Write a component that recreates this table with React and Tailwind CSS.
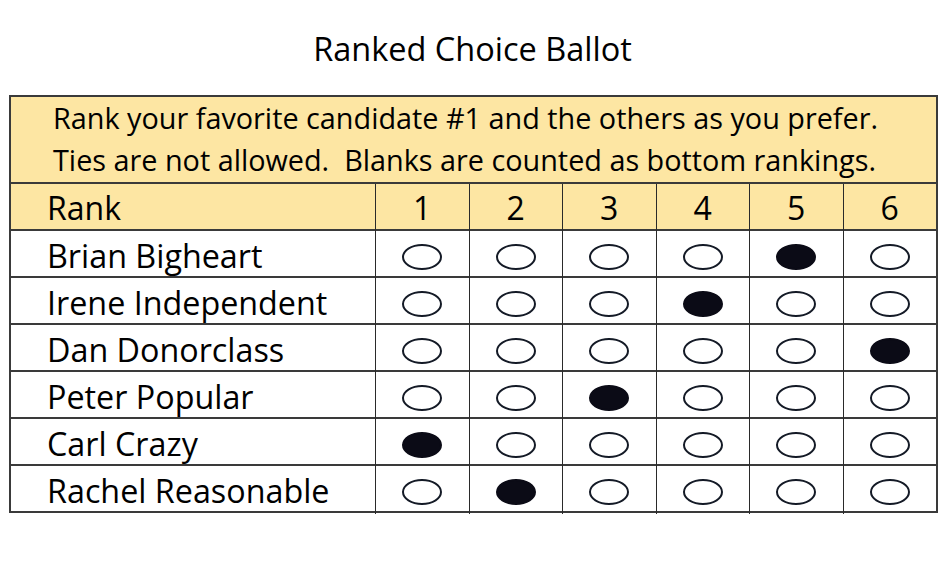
import React from "react";

const candidates = [
  ["Brian Bigheart", 5],
  ["Irene Independent", 4],
  ["Dan Donorclass", 6],
  ["Peter Popular", 3],
  ["Carl Crazy", 1],
  ["Rachel Reasonable", 2],
];

function Oval({ filled }) {
  return (
    <div
      className={
        filled
          ? "w-[40px] h-[26px] rounded-[50%] bg-[#0b0b16] border-[2px] border-[#0b0b16]"
          : "w-[40px] h-[26px] rounded-[50%] bg-white border-[2.5px] border-[#141a26]"
      }
    />
  );
}

export default function App() {
  const font = { fontFamily: "'Open Sans', sans-serif" };
  return (
    <div className="w-[945px] h-[570px] bg-white text-black" style={font}>
      <div className="h-[95px] flex justify-center pt-[29px]">
        <div className="text-[32.5px] leading-[40px]">Ranked Choice Ballot</div>
      </div>
      <div className="pl-[9px]">
        <div className="w-[929px] border-2 border-[#3a3a3a]">
          <div className="h-[85px] bg-[#fde6a3] pl-[42px] pt-[0px] text-[28.8px] leading-[42px]">
            <div>Rank your favorite candidate #1 and the others as you prefer.</div>
            <div>Ties are not allowed.&nbsp; Blanks are counted as bottom rankings.</div>
          </div>
          <div className="grid grid-cols-[364px_repeat(6,1fr)] h-[47px] border-t-2 border-[#3a3a3a] bg-[#fde6a3] text-[32px]">
            <div className="pl-[36px] flex items-center">Rank</div>
            {[1, 2, 3, 4, 5, 6].map((n) => (
              <div key={n} className="border-l-[1.5px] border-[#2a2a2a] flex items-center justify-center">
                {n}
              </div>
            ))}
          </div>
          {candidates.map(([name, rank]) => (
            <div
              key={name}
              className="grid grid-cols-[364px_repeat(6,1fr)] h-[47px] border-t-2 border-[#3a3a3a] text-[32.3px]"
            >
              <div className="pl-[36px] flex items-center">{name}</div>
              {[1, 2, 3, 4, 5, 6].map((n) => (
                <div key={n} className="border-l-[1.5px] border-[#2a2a2a] flex items-center justify-center pt-[3px]">
                  <Oval filled={n === rank} />
                </div>
              ))}
            </div>
          ))}
        </div>
      </div>
    </div>
  );
}
